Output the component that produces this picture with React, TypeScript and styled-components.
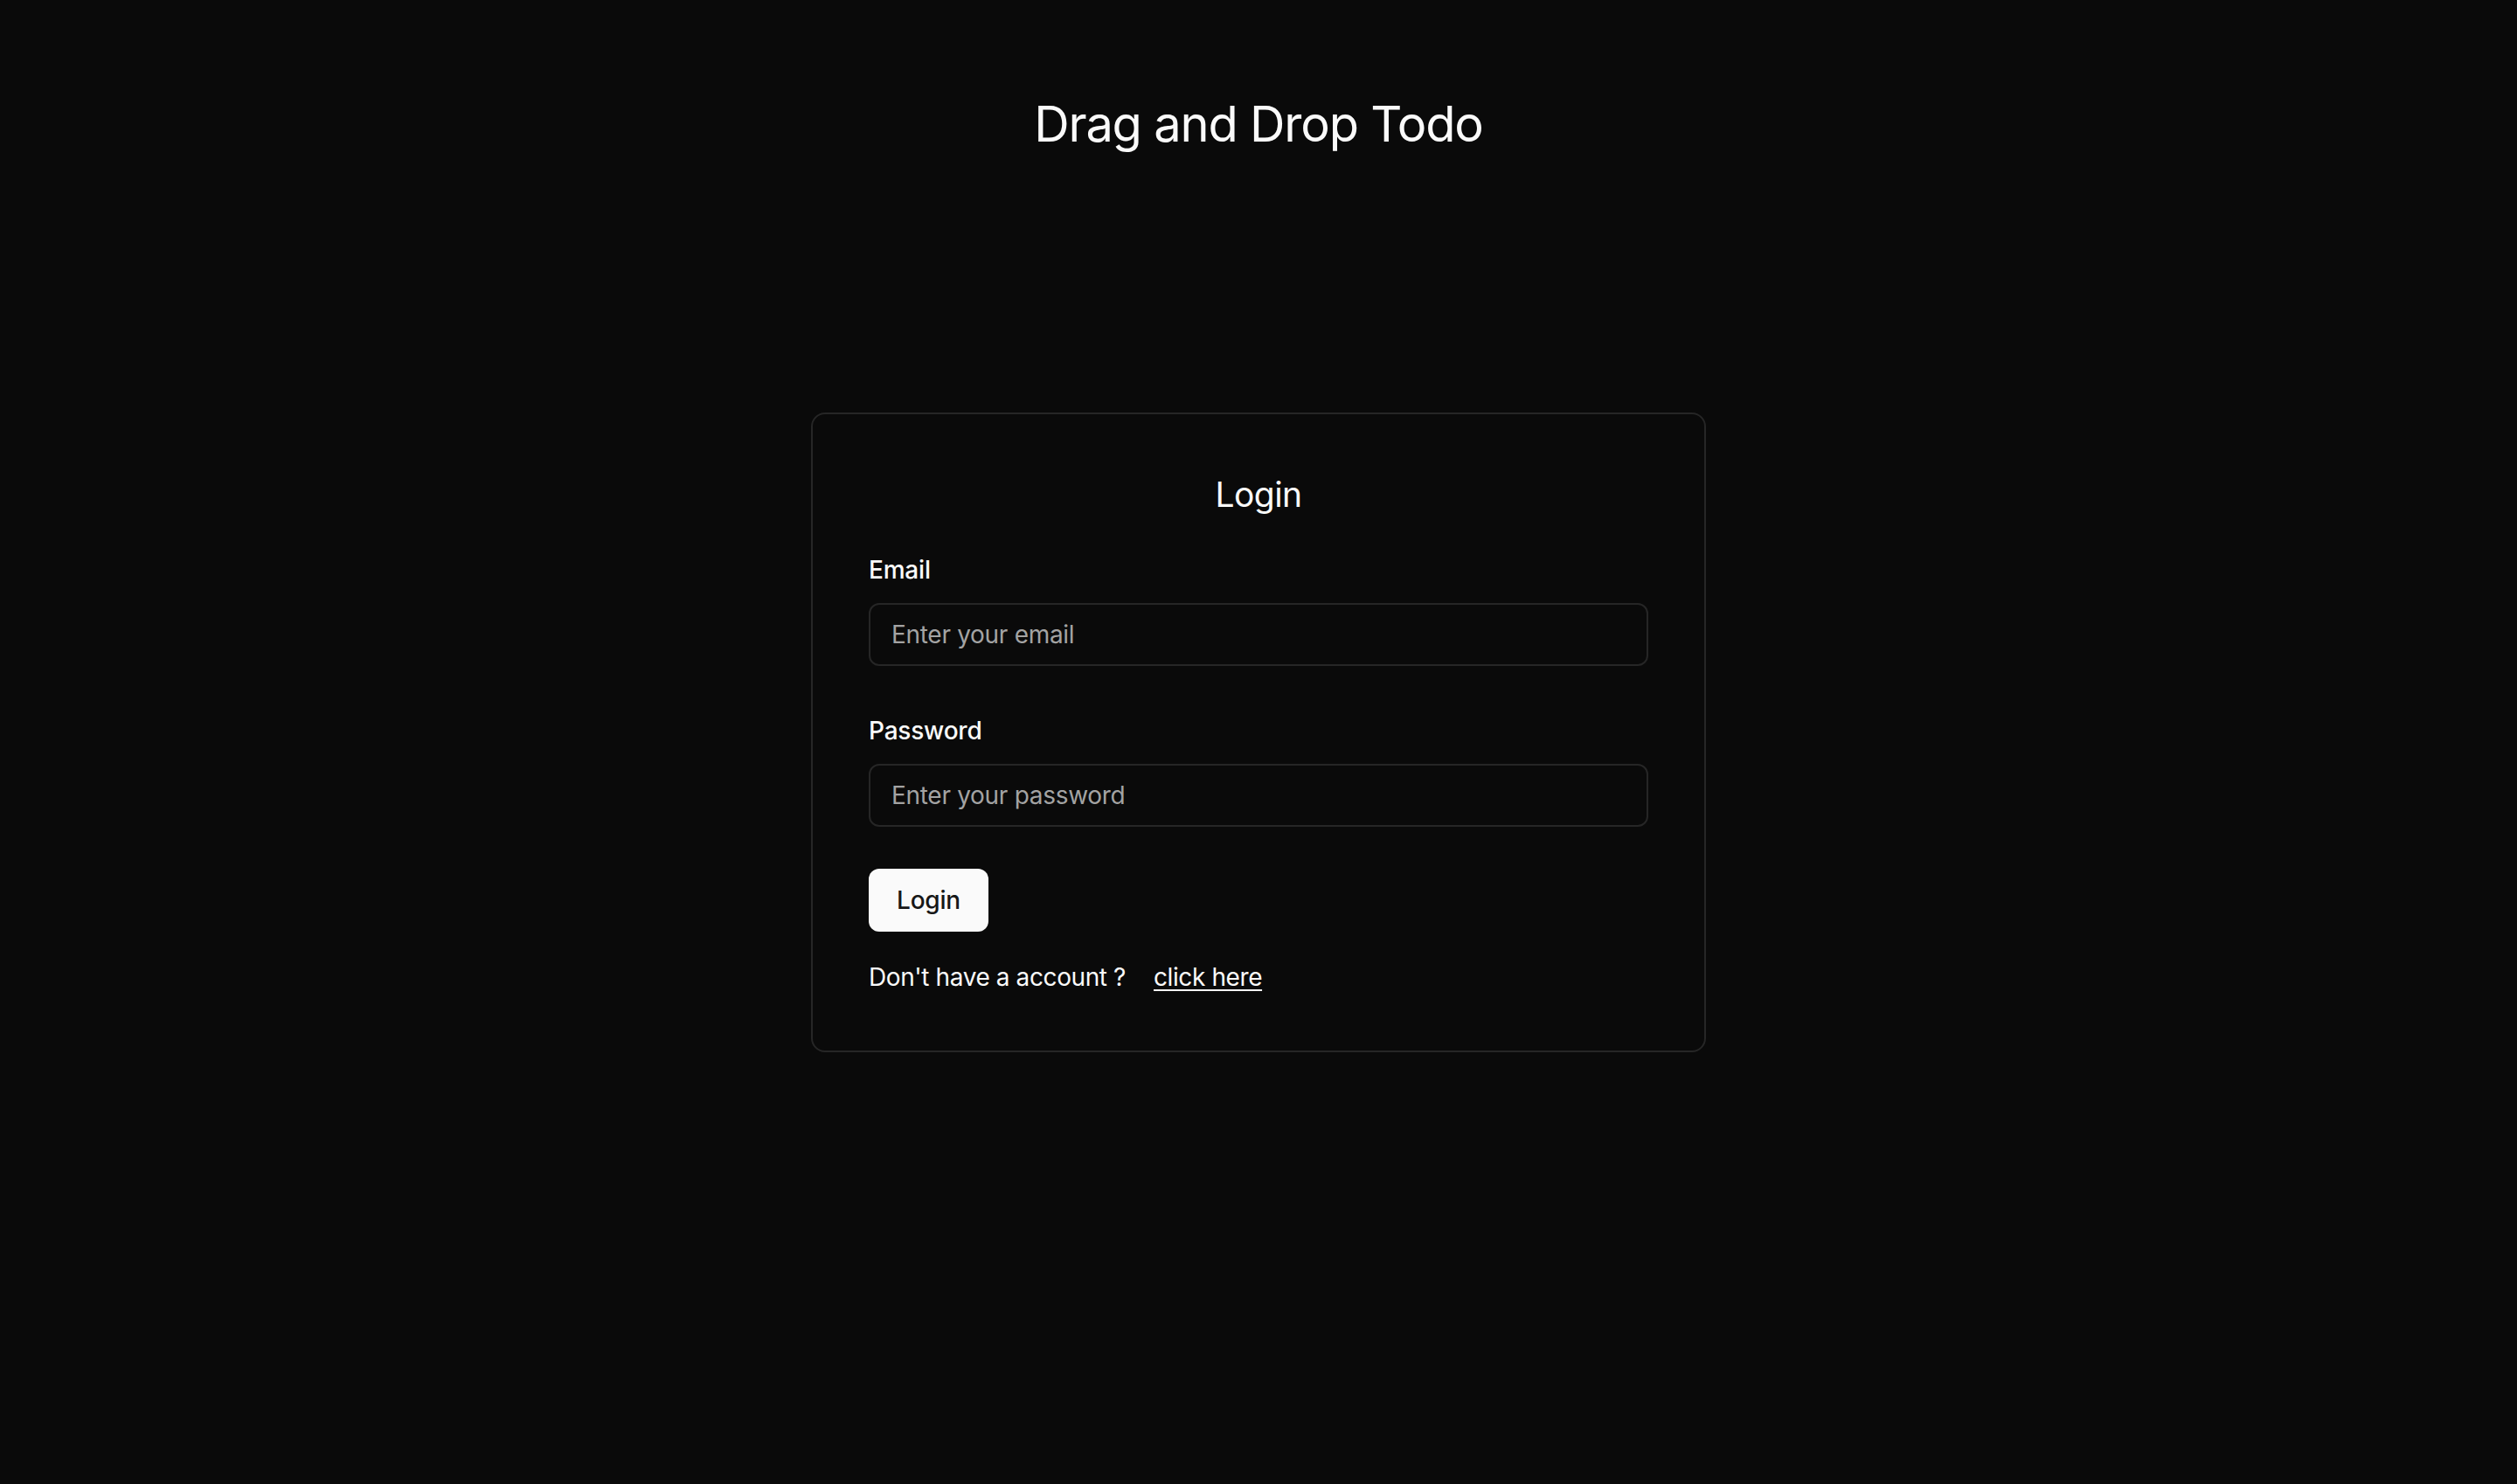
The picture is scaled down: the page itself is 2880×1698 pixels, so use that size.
import React from 'react';
import styled, { createGlobalStyle } from 'styled-components';

const GlobalStyle = createGlobalStyle`
  html, body {
    margin: 0;
    padding: 0;
    background: #0a0a0a;
  }
  body {
    font-family: Inter, "Noto Sans", "Liberation Sans", sans-serif;
    color: #fafafa;
    -webkit-font-smoothing: antialiased;
  }
  * {
    box-sizing: border-box;
  }
`;

const App: React.FC = () => {
  return (
    <>
      <GlobalStyle />
      <Page>
        <Title>Drag and Drop Todo</Title>

        <Card>
          <CardTitle>Login</CardTitle>

          <Field>
            <Label htmlFor="email">Email</Label>
            <Input id="email" type="email" placeholder="Enter your email" />
          </Field>

          <Field $gapTop={60}>
            <Label htmlFor="password">Password</Label>
            <Input id="password" type="password" placeholder="Enter your password" />
          </Field>

          <Button type="button">Login</Button>

          <Footer>
            Don't have a account ?<SignupLink href="#">click here</SignupLink>
          </Footer>
        </Card>
      </Page>
    </>
  );
};

export default App;

// Styles
const Page = styled.main`
  min-height: 100vh;
  display: flex;
  flex-direction: column;
  align-items: center;
  padding-top: 106px;
  background: #0a0a0a;
`;

const Title = styled.h1`
  margin: 0;
  font-size: 56px;
  line-height: 72px;
  font-weight: 400;
  color: #fafafa;
  letter-spacing: -1.2px;
`;

const Card = styled.section`
  margin-top: 294px;
  width: 1024px;
  display: flex;
  flex-direction: column;
  padding: 64px;
  background: #0a0a0a;
  border: 2px solid #262626;
  border-radius: 16px;
`;

const CardTitle = styled.h2`
  margin: 0 0 44px;
  text-align: center;
  font-size: 39px;
  line-height: 56px;
  font-weight: 400;
  letter-spacing: -0.6px;
  color: #fafafa;
`;

const Field = styled.div<{ $gapTop?: number }>`
  display: flex;
  flex-direction: column;
  gap: 24px;
  margin-top: ${(p) => p.$gapTop ?? 0}px;
`;

const Label = styled.label`
  font-size: 28px;
  line-height: 28px;
  font-weight: 500;
  letter-spacing: -0.2px;
  color: #fafafa;
`;

const Input = styled.input`
  height: 72px;
  width: 100%;
  padding: 0 24px;
  font-family: inherit;
  font-size: 28px;
  letter-spacing: -0.3px;
  color: #fafafa;
  background: transparent;
  border: 2px solid #262626;
  border-radius: 12px;
  outline: none;

  &::placeholder {
    color: #a3a3a3;
  }
`;

const Button = styled.button`
  align-self: flex-start;
  margin-top: 48px;
  height: 72px;
  padding: 0 32px;
  font-family: inherit;
  font-size: 28px;
  font-weight: 500;
  letter-spacing: -0.2px;
  color: #171717;
  background: #fafafa;
  border: none;
  border-radius: 12px;
  cursor: pointer;
`;

const Footer = styled.p`
  margin: 32px 0 0;
  font-size: 28px;
  line-height: 40px;
  letter-spacing: -0.4px;
  color: #fafafa;
`;

const SignupLink = styled.a`
  margin-left: 32px;
  color: #fafafa;
  text-decoration: underline;
  text-underline-offset: 4px;
`;
